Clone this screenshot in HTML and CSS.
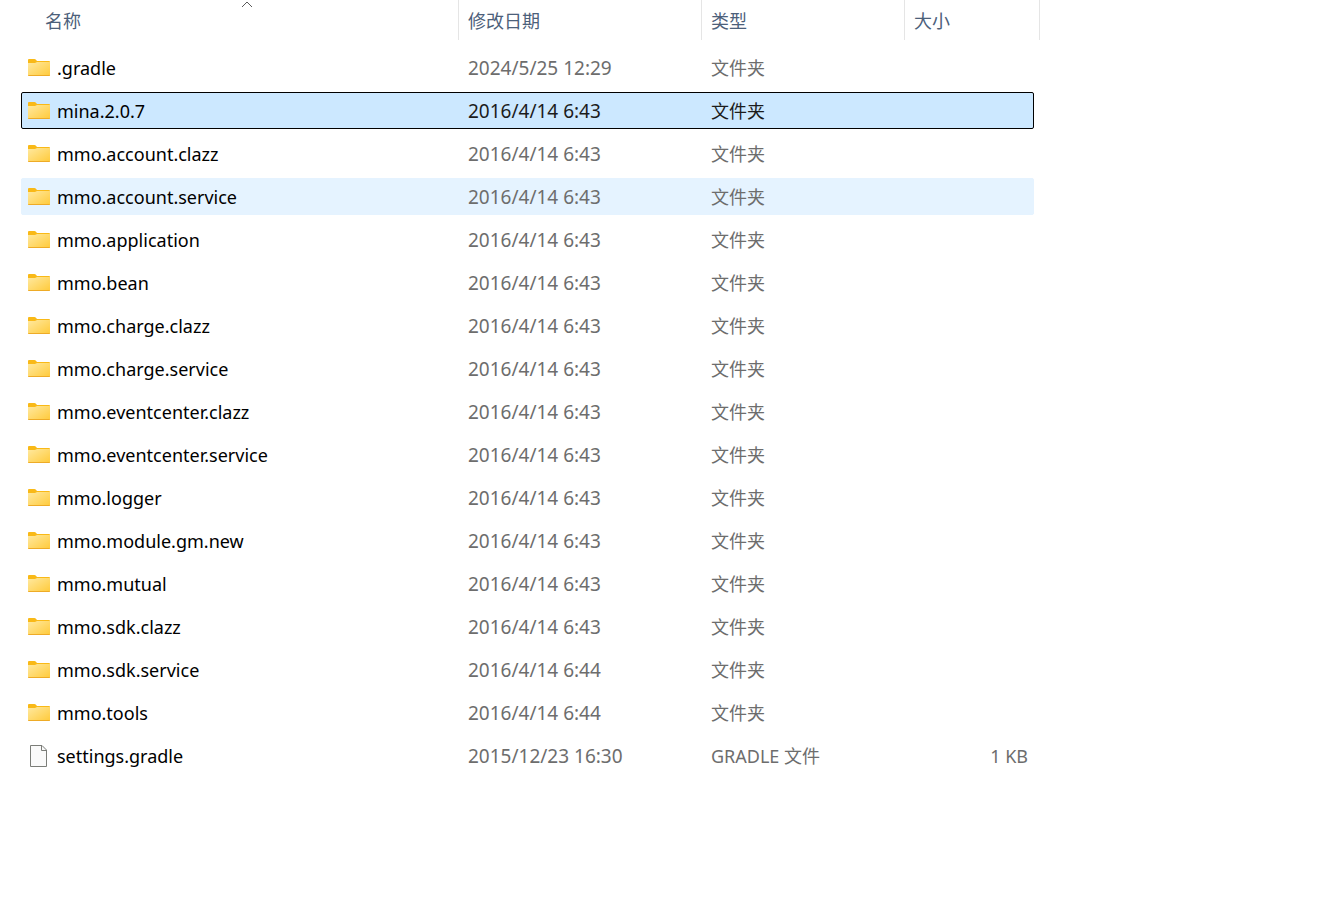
FILE: index.html
```
<!DOCTYPE html>
<html lang="zh-CN">
<head>
    <meta charset="UTF-8">
    <title>文件列表</title>
    <link rel="stylesheet" href="styles.css">
</head>
<body>
<!--图标-->
<svg class="defs" aria-hidden="true">
    <defs>
        <linearGradient id="yellow" x1="0" y1="0" x2="1" y2="1">
            <stop offset="0" stop-color="#ffe9a0"/>
            <stop offset="1" stop-color="#ffca3a"/>
        </linearGradient>
        <symbol id="folder" viewBox="0 0 22 22">
            <path d="M0 3Q0 2 1 2H6.500Q7.200 2 7.700 2.600L9 4H21Q22 4 22 5V10H0Z" fill="#f9b917"/>
            <path d="M0 6H7L9 5H22V18Q22 19 21 19H1Q0 19 0 18Z" fill="url(#yellow)"/>
            <path d="M0 18H22Q22 19 21 19H1Q0 19 0 18Z" fill="#eeab27"/>
        </symbol>
        <symbol id="file" viewBox="0 0 22 22">
            <path d="M2.500 .5H14L18.500 5V21.500H2.500Z" fill="#fafafa" stroke="#7b7d78"/>
            <path d="M13.500 .5V5.500H18.500" fill="none" stroke="#7b7d78"/>
        </symbol>
    </defs>
</svg>
<table id="files">
    <thead>
    <tr>
        <th aria-sort="ascending"><button>名称</button><svg class="arrow" viewBox="0 0 12 7"><path d="M1 6L6 1L11 6"/></svg></th>
        <th><button>修改日期</button></th>
        <th><button>类型</button></th>
        <th><button>大小</button></th>
    </tr>
    </thead>
    <tbody>
    <tr><td class="name"><svg class="icon"><use href="#folder"/></svg>.gradle</td><td class="date">2024/5/25 12:29</td><td class="type">文件夹</td><td class="size"></td></tr>
    <tr class="selected"><td class="name"><svg class="icon"><use href="#folder"/></svg>mina.2.0.7</td><td class="date">2016/4/14 6:43</td><td class="type">文件夹</td><td class="size"></td></tr>
    <tr><td class="name"><svg class="icon"><use href="#folder"/></svg>mmo.account.clazz</td><td class="date">2016/4/14 6:43</td><td class="type">文件夹</td><td class="size"></td></tr>
    <tr class="hover"><td class="name"><svg class="icon"><use href="#folder"/></svg>mmo.account.service</td><td class="date">2016/4/14 6:43</td><td class="type">文件夹</td><td class="size"></td></tr>
    <tr><td class="name"><svg class="icon"><use href="#folder"/></svg>mmo.application</td><td class="date">2016/4/14 6:43</td><td class="type">文件夹</td><td class="size"></td></tr>
    <tr><td class="name"><svg class="icon"><use href="#folder"/></svg>mmo.bean</td><td class="date">2016/4/14 6:43</td><td class="type">文件夹</td><td class="size"></td></tr>
    <tr><td class="name"><svg class="icon"><use href="#folder"/></svg>mmo.charge.clazz</td><td class="date">2016/4/14 6:43</td><td class="type">文件夹</td><td class="size"></td></tr>
    <tr><td class="name"><svg class="icon"><use href="#folder"/></svg>mmo.charge.service</td><td class="date">2016/4/14 6:43</td><td class="type">文件夹</td><td class="size"></td></tr>
    <tr><td class="name"><svg class="icon"><use href="#folder"/></svg>mmo.eventcenter.clazz</td><td class="date">2016/4/14 6:43</td><td class="type">文件夹</td><td class="size"></td></tr>
    <tr><td class="name"><svg class="icon"><use href="#folder"/></svg>mmo.eventcenter.service</td><td class="date">2016/4/14 6:43</td><td class="type">文件夹</td><td class="size"></td></tr>
    <tr><td class="name"><svg class="icon"><use href="#folder"/></svg>mmo.logger</td><td class="date">2016/4/14 6:43</td><td class="type">文件夹</td><td class="size"></td></tr>
    <tr><td class="name"><svg class="icon"><use href="#folder"/></svg>mmo.module.gm.new</td><td class="date">2016/4/14 6:43</td><td class="type">文件夹</td><td class="size"></td></tr>
    <tr><td class="name"><svg class="icon"><use href="#folder"/></svg>mmo.mutual</td><td class="date">2016/4/14 6:43</td><td class="type">文件夹</td><td class="size"></td></tr>
    <tr><td class="name"><svg class="icon"><use href="#folder"/></svg>mmo.sdk.clazz</td><td class="date">2016/4/14 6:43</td><td class="type">文件夹</td><td class="size"></td></tr>
    <tr><td class="name"><svg class="icon"><use href="#folder"/></svg>mmo.sdk.service</td><td class="date">2016/4/14 6:44</td><td class="type">文件夹</td><td class="size"></td></tr>
    <tr><td class="name"><svg class="icon"><use href="#folder"/></svg>mmo.tools</td><td class="date">2016/4/14 6:44</td><td class="type">文件夹</td><td class="size"></td></tr>
    <tr><td class="name"><svg class="icon"><use href="#file"/></svg>settings.gradle</td><td class="date">2015/12/23 16:30</td><td class="type">GRADLE 文件</td><td class="size">1 KB</td></tr>
    </tbody>
</table>
</body>
</html>
```
FILE: styles.css
```
*{
    margin: 0;
    padding: 0;
    box-sizing: border-box;
}
body{
    background: #fff;
    font-family: "Noto Sans","Noto Sans CJK SC",sans-serif;
    font-size: 18px;
    line-height: 24px;
    color: #6d6d6d;
}
.defs{
    position: absolute;
    width: 0;
    height: 0;
}
#files,#files thead,#files tbody{
    display: block;
}
#files{
    padding-left: 21px;
}
/*表头*/
#files thead tr{
    display: grid;
    grid-template-columns: 423px 243px 203px 135px;
    margin-left: 15px;
}
#files th{
    height: 40px;
    border-right: 1px solid #e5e5e5;
    position: relative;
}
#files th button{
    width: 100%;
    height: 40px;
    padding: 2px 0 0 9px;
    border: 0;
    background: none;
    font: inherit;
    font-weight: normal;
    text-align: left;
    color: #4c607a;
}
.arrow{
    width: 12px;
    height: 7px;
    position: absolute;
    left: 50%;
    top: 1px;
    margin-left: -6px;
    fill: none;
    stroke: #5a5a5a;
}
/*列表*/
#files tbody{
    padding-top: 9px;
}
#files tbody tr{
    display: grid;
    grid-template-columns: 437px 243px 203px 128px;
    width: max-content;
    height: 37px;
    margin-bottom: 6px;
    border: 1px solid transparent;
    border-radius: 2px;
}
#files td{
    height: 35px;
    padding-left: 9px;
    display: flex;
    align-items: center;
    white-space: pre;
}
#files .selected{
    background: #cce8ff;
    border-color: #000;
}
#files .selected td{
    color: #1c1c1c;
}
#files .hover{
    background: #e5f3ff;
    border-color: #e5f3ff;
}
#files .name,#files .selected .name{
    padding-left: 6px;
    gap: 7px;
    color: #000;
}
#files .date{
    font-size: 19px;
}
#files .size{
    justify-content: flex-end;
    padding-right: 5px;
}
.icon{
    width: 22px;
    height: 22px;
}
```
